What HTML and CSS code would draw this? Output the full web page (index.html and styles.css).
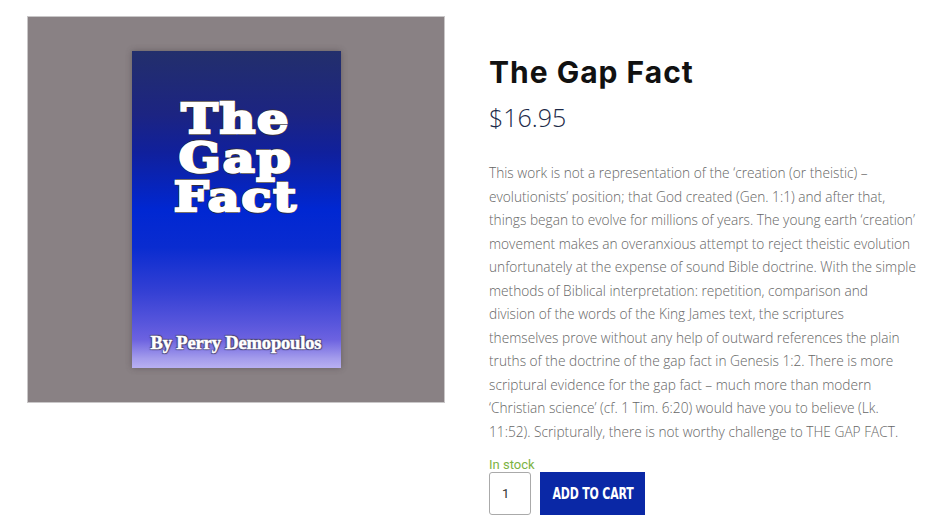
FILE: index.html
```html
<!DOCTYPE html>
<html lang="en">
<head>
<meta charset="utf-8">
<title>The Gap Fact</title>
<link rel="stylesheet" href="styles.css">
</head>
<body>
<div class="product">
  <div class="gallery">
    <div class="book">
      <div class="book-title">
        <span>The</span>
        <span>Gap</span>
        <span>Fact</span>
      </div>
      <div class="book-author">By Perry Demopoulos</div>
    </div>
  </div>
  <div class="summary">
    <h1 class="title">The Gap Fact</h1>
    <p class="price">$16.95</p>
    <p class="desc">This work is not a representation of the ‘creation (or theistic) –<br>evolutionists’ position; that God created (Gen. 1:1) and after that,<br>things began to evolve for millions of years. The young earth ‘creation’<br>movement makes an overanxious attempt to reject theistic evolution<br>unfortunately at the expense of sound Bible doctrine. With the simple<br>methods of Biblical interpretation: repetition, comparison and<br>division of the words of the King James text, the scriptures<br>themselves prove without any help of outward references the plain<br>truths of the doctrine of the gap fact in Genesis 1:2. There is more<br>scriptural evidence for the gap fact – much more than modern<br>‘Christian science’ (cf. 1 Tim. 6:20) would have you to believe (Lk.<br>11:52). Scripturally, there is not worthy challenge to THE GAP FACT.</p>
    <p class="stock">In stock</p>
    <form class="cart">
      <input class="qty" type="number" value="1" min="1">
      <button class="add" type="button"><span class="add-label">ADD TO CART</span></button>
    </form>
  </div>
</div>
</body>
</html>
```
FILE: styles.css
```css
* { box-sizing: border-box; }
html, body { margin: 0; padding: 0; background: #fff; }
body { font-family: "Open Sans", "Liberation Sans", sans-serif; }

.product {
  display: flex;
  align-items: flex-start;
  padding: 16px 0 0 27px;
  gap: 44px;
}

.gallery {
  width: 418px;
  height: 387px;
  background: #898184;
  border: 1px solid #c9c7c8;
  display: flex;
  align-items: center;
  justify-content: center;
  flex-shrink: 0;
}

.book {
  width: 209px;
  height: 317px;
  background: linear-gradient(to bottom,
    #232f6c 0%,
    #1c2482 20%,
    #10209c 32%,
    #0027d2 50%,
    #0a2cd0 62%,
    #3440d4 76%,
    #5856dc 86%,
    #6c62e0 91%,
    #a49cec 97%,
    #b8b0f2 100%);
  box-shadow: 0 0 6px rgba(60, 50, 55, 0.45);
  display: flex;
  flex-direction: column;
  align-items: center;
  padding-top: 49px;
}

.book-title {
  display: flex;
  flex-direction: column;
  align-items: center;
  font-family: "DejaVu Serif", "Liberation Serif", serif;
  font-weight: 700;
  font-size: 41px;
  line-height: 39px;
  color: #fff;
  letter-spacing: 1.5px;
  transform: scaleX(1.2);
  -webkit-text-stroke: 2.4px #fff;
  text-shadow: 1px 1px 0 #3a3028, -1px -1px 0 #3a3028, 1px -1px 0 #3a3028, -1px 1px 0 #3a3028,
               1.6px 0 0 #3a3028, -1.6px 0 0 #3a3028, 0 1.6px 0 #3a3028, 0 -1.6px 0 #3a3028;
}

.book-author {
  margin-top: auto;
  margin-bottom: 14px;
  font-family: "Liberation Serif", "DejaVu Serif", serif;
  font-weight: 700;
  font-size: 18.5px;
  letter-spacing: -0.15px;
  color: #fff;
  -webkit-text-stroke: 0.5px #fff;
  text-shadow: 0 0 1px #4a4470, 1px 1px 1px #4a4470, -1px -1px 1px #4a4470, 1px -1px 1px #4a4470, -1px 1px 1px #4a4470;
}

.summary {
  width: 450px;
  padding-top: 36px;
}

.title {
  margin: 0;
  font-family: "Inter", "DejaVu Sans", sans-serif;
  font-weight: 700;
  font-size: 30px;
  line-height: 40px;
  color: #111;
  letter-spacing: 1px;
}

.price {
  margin: 10px 0 0;
  font-family: "Open Sans", sans-serif;
  font-weight: 300;
  font-size: 25px;
  line-height: 30px;
  color: #1c2a48;
}

.desc {
  margin: 29px 0 0;
  font-family: "Open Sans", sans-serif;
  font-weight: 300;
  font-size: 13.7px;
  line-height: 23.5px;
  color: #666;
  white-space: nowrap;
}

.stock {
  margin: 14px 0 0;
  font-family: "Roboto", "Liberation Sans", sans-serif;
  font-size: 13px;
  line-height: 15px;
  color: #7cb342;
}

.cart {
  display: flex;
  gap: 9px;
  margin: 0;
}

.qty {
  width: 42px;
  height: 43px;
  border: 1px solid #aaa;
  border-radius: 3px;
  font-family: "Roboto", "Liberation Sans", sans-serif;
  font-size: 13px;
  padding: 0 0 0 12px;
  color: #333;
  -moz-appearance: textfield;
}
.qty::-webkit-inner-spin-button,
.qty::-webkit-outer-spin-button { -webkit-appearance: none; margin: 0; }

.add {
  width: 105px;
  height: 43px;
  border: 0;
  background: #0a28a6;
  color: #fff;
  padding: 0;
  display: flex;
  align-items: center;
  justify-content: center;
}

.add-label {
  display: inline-block;
  font-family: "DejaVu Sans Condensed", "DejaVu Sans", sans-serif;
  font-stretch: condensed;
  font-weight: 700;
  font-size: 15px;
  letter-spacing: -0.2px;
  white-space: nowrap;
  transform: scaleX(0.81);
}
```
